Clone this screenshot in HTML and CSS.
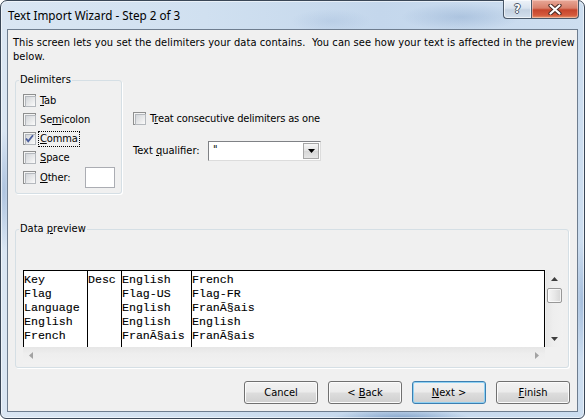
FILE: index.html
```html
<!DOCTYPE html>
<html>
<head>
<meta charset="utf-8">
<link rel="stylesheet" href="styles.css">
</head>
<body>
<div class="window">
  <div class="titlebar">
    <span class="title">Text Import Wizard - Step 2 of 3</span>
    <div class="caption-btns">
      <div class="cbtn help"><span>?</span></div>
      <div class="cbtn close">
        <svg width="14" height="11" viewBox="0 0 14 11"><path d="M2.5 1.5 L11.5 9.5 M11.5 1.5 L2.5 9.5" stroke="#4a2a24" stroke-width="4.2" stroke-linecap="round"/><path d="M2.5 1.5 L11.5 9.5 M11.5 1.5 L2.5 9.5" stroke="#fff" stroke-width="2.2" stroke-linecap="round"/></svg>
      </div>
    </div>
  </div>
  <div class="client">
    <p class="intro">This screen lets you set the delimiters your data contains.&nbsp; You can see how your text is affected in the preview<br>below.</p>
    <div class="options">
      <div class="group delims">
        <span class="legend">Delimiters</span>
        <div class="list">
          <div class="chk-row"><span class="chk"></span><span class="lbl"><u>T</u>ab</span></div>
          <div class="chk-row"><span class="chk"></span><span class="lbl">Se<u>m</u>icolon</span></div>
          <div class="chk-row"><span class="chk"><svg class="tick" width="13" height="13" viewBox="0 0 13 13"><path d="M3 6.5 L5.2 9.2 L10 3.2" fill="none" stroke="#4b5e9c" stroke-width="1.8"/></svg></span><span class="lbl focus"><u>C</u>omma</span></div>
          <div class="chk-row"><span class="chk"></span><span class="lbl"><u>S</u>pace</span></div>
          <div class="chk-row other-row"><span class="chk"></span><span class="lbl"><u>O</u>ther:</span><span class="other-input"></span></div>
        </div>
      </div>
      <div class="right-opts">
        <div class="chk-row treat"><span class="chk"></span><span class="lbl">T<u>r</u>eat consecutive delimiters as one</span></div>
        <div class="qual-row">
          <span class="qual-label">Text <u>q</u>ualifier:</span>
          <div class="combo">
            <span class="val">"</span>
            <span class="drop"><svg width="7" height="4" viewBox="0 0 7 4"><path d="M0 0 H7 L3.5 4 Z" fill="#000"/></svg></span>
          </div>
        </div>
      </div>
    </div>
    <div class="group preview">
      <span class="legend">Data <u>p</u>review</span>
      <div class="pv">
        <div class="pv-main">
          <div class="grid">
            <div class="col c1">Key
Flag
Language
English
French</div>
            <div class="col c2">Desc</div>
            <div class="col c3">English
Flag-US
English
English
FranÃ§ais</div>
            <div class="col c4">French
Flag-FR
FranÃ§ais
English
FranÃ§ais</div>
          </div>
          <div class="hscroll">
            <svg width="4" height="7" viewBox="0 0 4 7"><path d="M4 0 V7 L0 3.5 Z" fill="#a3a3a3"/></svg>
            <svg width="4" height="7" viewBox="0 0 4 7"><path d="M0 0 V7 L4 3.5 Z" fill="#a3a3a3"/></svg>
          </div>
        </div>
        <div class="vscroll">
          <div class="sb-btn"><svg width="7" height="4" viewBox="0 0 7 4"><path d="M0 4 H7 L3.5 0 Z" fill="#3e3e3e"/></svg></div>
          <div class="thumb"></div>
          <div class="sb-space"></div>
          <div class="sb-btn"><svg width="7" height="4" viewBox="0 0 7 4"><path d="M0 0 H7 L3.5 4 Z" fill="#3e3e3e"/></svg></div>
        </div>
      </div>
    </div>
    <div class="buttons">
      <div class="btn">Cancel</div>
      <div class="btn">&lt;&nbsp;<u>B</u>ack</div>
      <div class="btn default"><u>N</u>ext&nbsp;&gt;</div>
      <div class="btn"><u>F</u>inish</div>
    </div>
  </div>
</div>
</body>
</html>
```

FILE: styles.css
```css
* { box-sizing: border-box; }
html, body { margin: 0; padding: 0; }
body {
  width: 585px;
  height: 419px;
  overflow: hidden;
  background: #ffffff;
  font-family: "DejaVu Sans Condensed", "DejaVu Sans", sans-serif;
  font-stretch: condensed;
  font-size: 11px;
  color: #000;
}
u { text-decoration: underline; text-underline-offset: 1px; }

.window {
  width: 585px;
  height: 419px;
  border: 1px solid #3a4757;
  border-radius: 7px 7px 6px 6px;
  padding: 0 6px 6px;
  display: flex;
  flex-direction: column;
  box-shadow: inset 0 0 0 1px rgba(255,255,255,0.55);
  background:
    radial-gradient(ellipse 70px 10px at 400px 418px, rgba(70,115,170,0.55), transparent),
    radial-gradient(ellipse 60px 14px at 460px 16px, rgba(110,145,190,0.3), transparent),
    radial-gradient(ellipse 40px 12px at 330px 20px, rgba(130,160,200,0.2), transparent),
    radial-gradient(ellipse 8px 60px at 3px 190px, rgba(90,130,185,0.35), transparent),
    radial-gradient(ellipse 8px 60px at 581px 300px, rgba(90,130,185,0.35), transparent),
    linear-gradient(90deg, #dae6f3 0%, #d0e0f0 35%, #c4d7ec 65%, #cddef0 100%);
}

.titlebar {
  height: 28px;
  display: flex;
  align-items: flex-start;
}
.title {
  font-family: "Noto Sans", "Open Sans", sans-serif;
  font-stretch: normal;
  font-size: 11.7px;
  line-height: 16px;
  padding: 6px 0 0 1px;
  color: #000;
}
.caption-btns {
  margin: -1px -1px 0 auto;
  display: flex;
}
.cbtn {
  height: 19px;
  border: 1px solid #4a5868;
  border-top: none;
  display: flex;
  align-items: center;
  justify-content: center;
}
.help {
  width: 28px;
  border-right: none;
  border-radius: 0 0 0 4px;
  background: linear-gradient(#eef3f9 0%, #d9e3ee 45%, #c3d1e1 55%, #d3dfec 100%);
  box-shadow: inset 0 0 0 1px rgba(255,255,255,0.6);
}
.help span {
  font-family: "DejaVu Sans", sans-serif;
  font-weight: bold;
  font-size: 12px;
  line-height: 12px;
  color: #fff;
  text-shadow: 1px 0 0 #4a5868, -1px 0 0 #4a5868, 0 1px 0 #4a5868, 0 -1px 0 #4a5868;
}
.close {
  width: 48px;
  border-radius: 0 0 4px 0;
  background: linear-gradient(#e8a898 0%, #d9806b 45%, #c6452c 55%, #d55a3c 85%, #e39a6e 100%);
  box-shadow: inset 0 0 0 1px rgba(255,220,210,0.5);
}

.client {
  height: 383px;
  border: 1px solid #6e7d8f;
  background: #f0f0f0;
}

.intro {
  margin: 6px 0 0 5px;
  line-height: 14px;
  white-space: nowrap;
  letter-spacing: 0.08px;
}

.options {
  display: flex;
  margin-top: 16px;
  padding-left: 7px;
}

.group {
  border: 1px solid #d5dfe5;
  border-radius: 3px;
  box-shadow: 1px 1px 0 #ffffff;
}
.legend {
  display: table;
  margin: -8px 0 0 3px;
  padding: 0 1px;
  background: #f0f0f0;
  line-height: 14px;
}
.delims {
  width: 107px;
  height: 114px;
}
.list { padding-top: 4px; }

.chk-row {
  display: flex;
  align-items: center;
  height: 19px;
  padding-left: 7px;
}
.other-row { height: 21px; }
.chk {
  position: relative;
  width: 13px;
  height: 13px;
  flex: none;
  border: 1px solid #8e8f8f;
  background: #f4f4f4;
  padding: 1px;
}
.chk::before {
  content: "";
  display: block;
  width: 9px;
  height: 9px;
  border: 1px solid #b4b8bd;
  background: linear-gradient(135deg, #d3d6da 0%, #eaebec 60%, #fbfbfb 100%);
}
.tick {
  position: absolute;
  left: -1px;
  top: -1px;
}
.lbl {
  margin-left: 2px;
  padding: 0 1px;
  border: 1px dotted transparent;
  line-height: 14px;
  white-space: nowrap;
  letter-spacing: -0.15px;
}
.lbl.focus { border-color: #000; }
.other-input {
  width: 30px;
  height: 21px;
  margin: 0 6px 0 auto;
  border: 1px solid #abadb3;
  background: #fff;
}

.right-opts {
  margin-left: 11px;
  padding-top: 29px;
}
.treat { padding-left: 0; }
.qual-row {
  display: flex;
  align-items: center;
  margin-top: 13px;
}
.qual-label {
  width: 75px;
  line-height: 14px;
}
.combo {
  width: 113px;
  height: 20px;
  border: 1px solid;
  border-color: #7f8185 #dcdcdc #dcdcdc #7f8185;
  background: #fff;
  padding: 1px;
  display: flex;
}
.val {
  flex: 1;
  padding: 0 0 0 3px;
  line-height: 14px;
}
.drop {
  width: 16px;
  height: 16px;
  border: 1px solid #a6a6a6;
  background: linear-gradient(#f7f7f7, #e2e2e2 50%, #d6d6d6 50%, #e6e6e6);
  display: flex;
  align-items: center;
  justify-content: center;
}

.preview {
  width: 554px;
  height: 139px;
  margin: 35px 0 0 7px;
}
.pv {
  display: flex;
  gap: 1px;
  margin: 34px 0 0 7px;
}
.pv-main { width: 522px; }
.grid {
  display: flex;
  height: 77px;
  border: 1px solid #000;
  border-bottom: none;
  background: #fff;
}
.col {
  padding-top: 2px;
  line-height: 14px;
  font-family: "Liberation Mono", monospace;
  font-stretch: normal;
  font-size: 11.6px;
  white-space: pre;
  border-right: 1px solid #000;
  overflow: hidden;
  -webkit-text-stroke: 0.12px #000;
}
.c1 { width: 64px; }
.c2 { width: 34px; }
.c3 { width: 70px; }
.c4 { flex: 1; border-right: none; }
.hscroll {
  height: 17px;
  display: flex;
  align-items: center;
  justify-content: space-between;
  padding: 0 6px;
  background: linear-gradient(#e6e6e6, #eeeeee 40%, #f1f1f1);
}
.vscroll {
  width: 17px;
  height: 77px;
  display: flex;
  flex-direction: column;
  background: linear-gradient(90deg, #e6e6e6, #eeeeee 40%, #f1f1f1);
}
.sb-btn {
  height: 17px;
  display: flex;
  align-items: center;
  justify-content: center;
}
.thumb {
  height: 15px;
  margin: 1px 1px 0;
  border: 1px solid #979797;
  border-radius: 2px;
  background: linear-gradient(90deg, #f6f6f6, #e8e8e8 50%, #d6d6d6);
  box-shadow: inset 0 0 0 1px rgba(255,255,255,0.7);
}
.sb-space { flex: 1; }

.buttons {
  display: flex;
  justify-content: flex-end;
  gap: 10px;
  margin: 13px 7px 0 0;
}
.btn {
  width: 74px;
  height: 23px;
  border: 1px solid #707070;
  border-radius: 3px;
  background: linear-gradient(#f2f2f2 0%, #ebebeb 48%, #dddddd 52%, #cfcfcf 100%);
  box-shadow: inset 0 0 0 1px #fbfbfb;
  display: flex;
  align-items: center;
  justify-content: center;
  line-height: 14px;
}
.btn.default {
  border-color: #3c7fb1;
  box-shadow: inset 0 0 0 1px #8fd1f3;
}
```
